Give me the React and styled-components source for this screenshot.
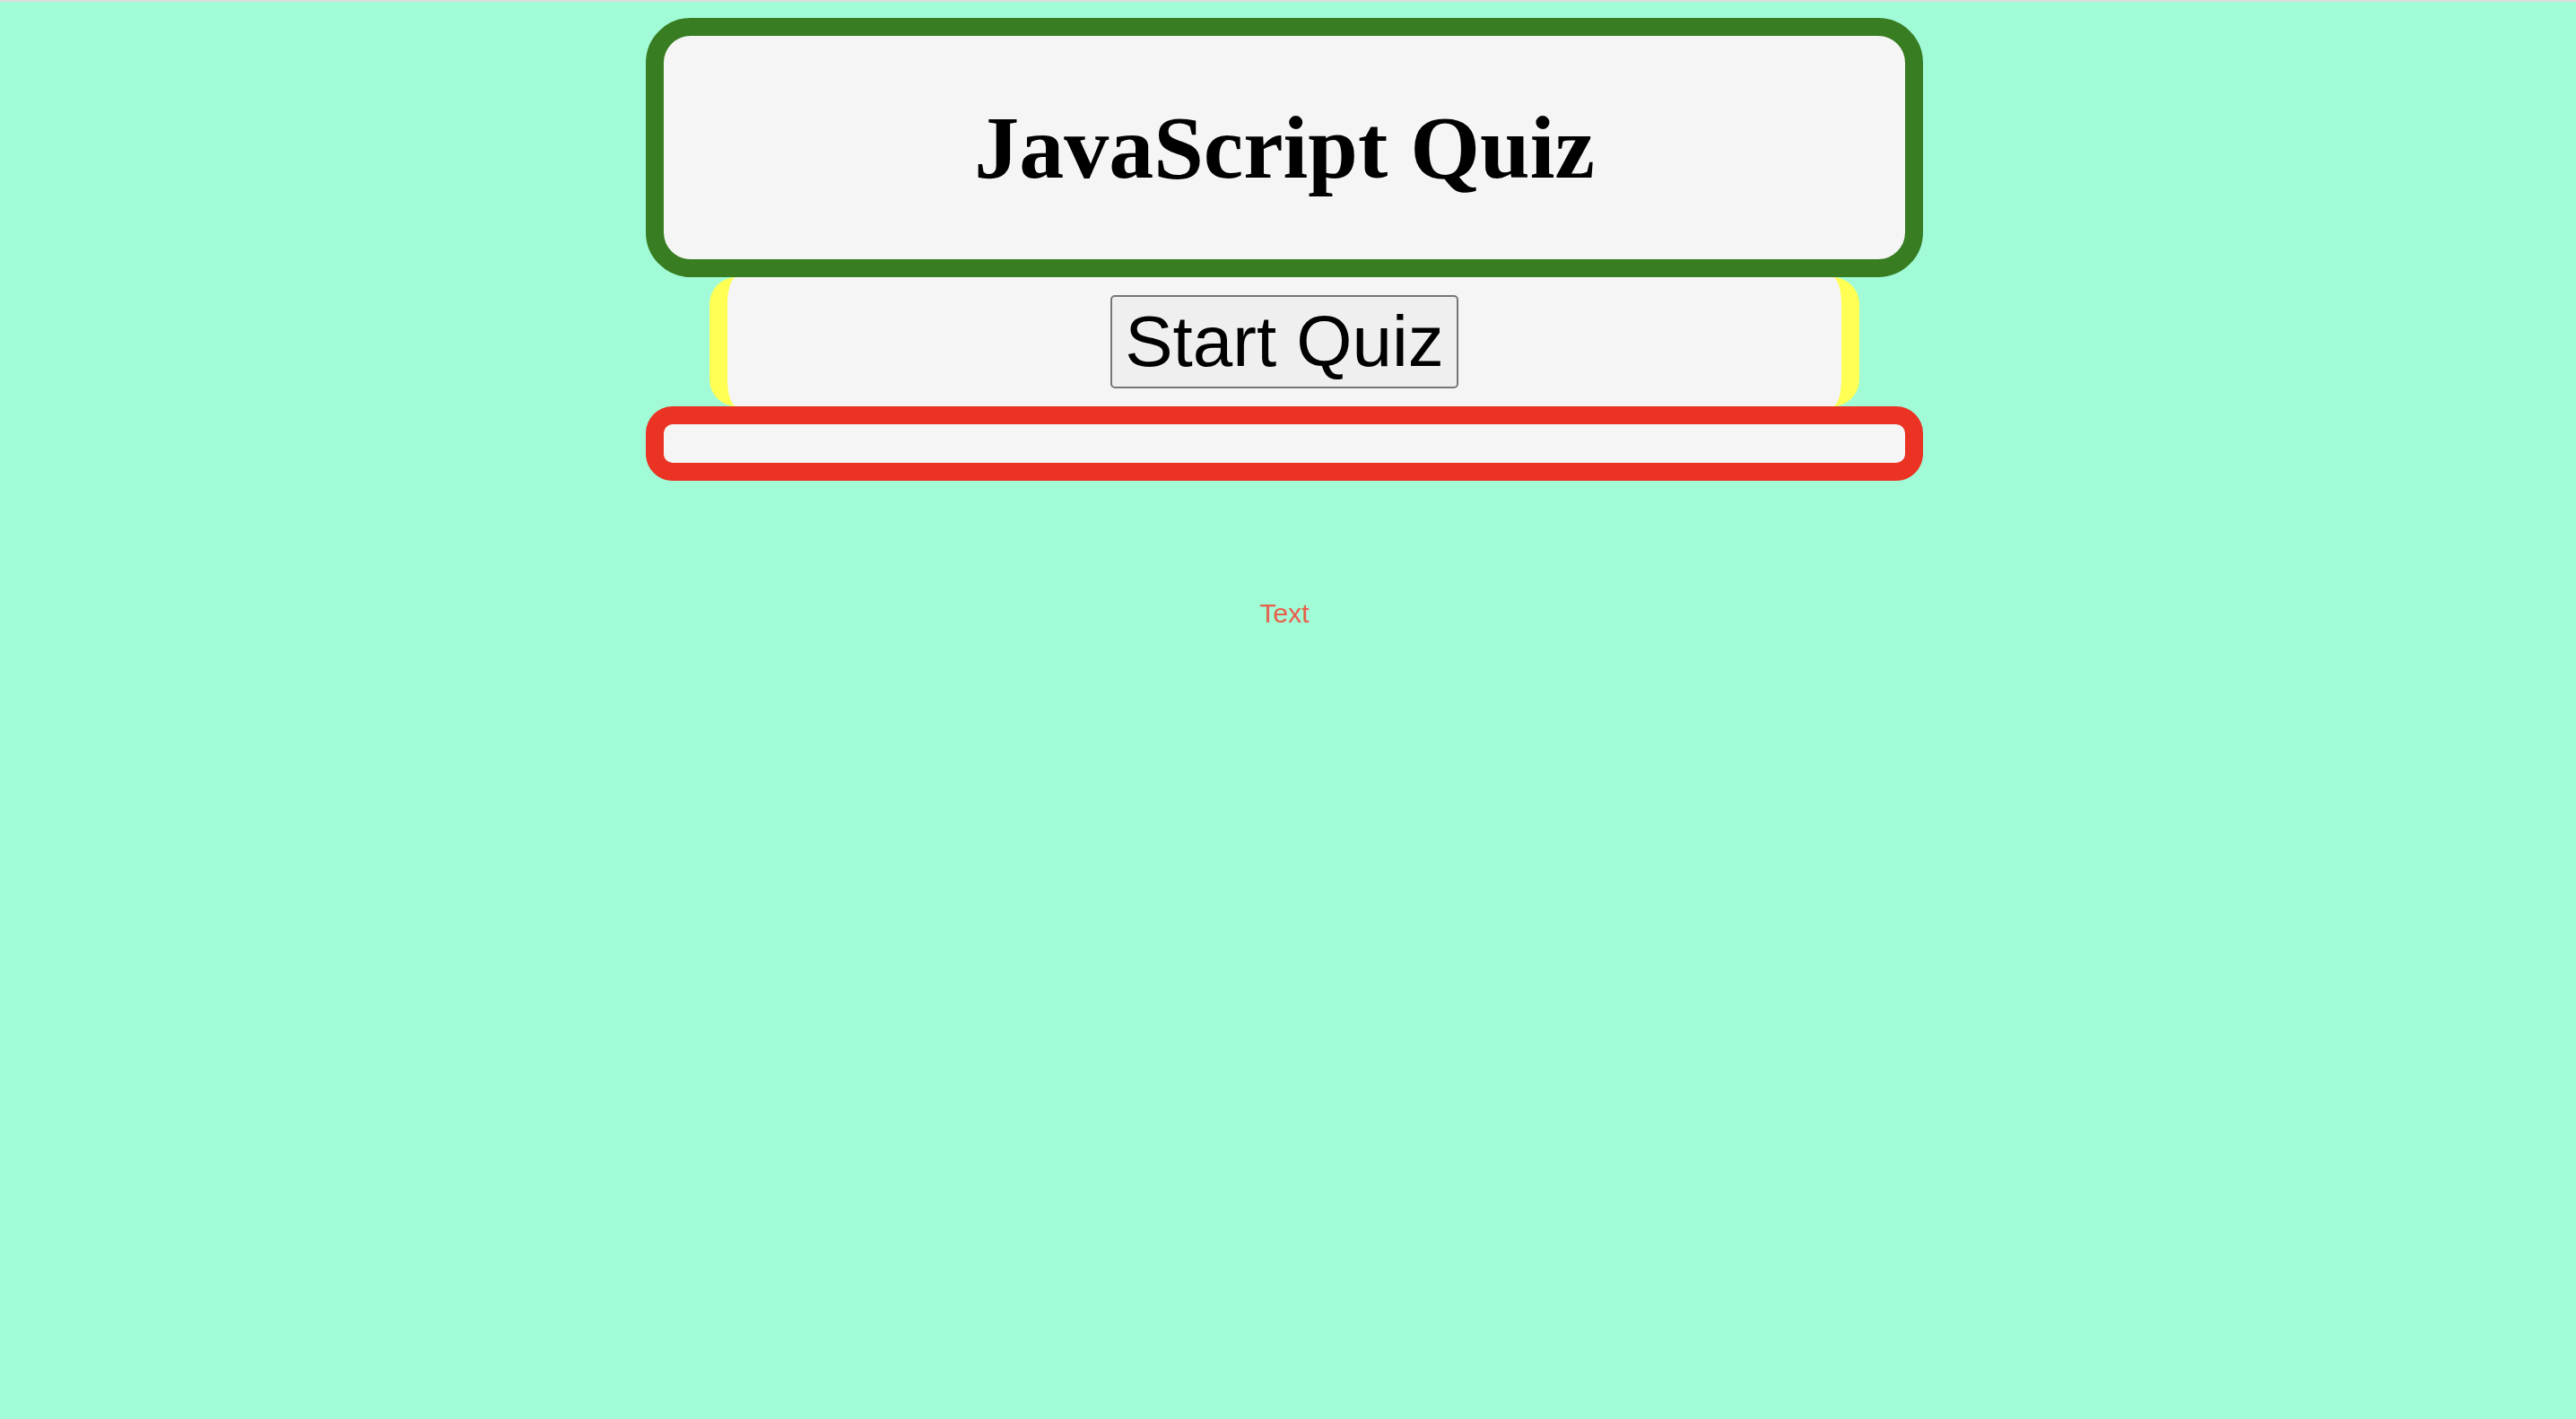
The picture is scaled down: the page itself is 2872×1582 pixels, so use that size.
import React from 'react'
import styled, { createGlobalStyle } from 'styled-components'

const GlobalStyle = createGlobalStyle`
  body {
    margin: 0;
    background: #a1fbd7;
    font-family: "Liberation Sans", Arial, sans-serif;
  }
`

const Page = styled.div`
  display: flex;
  flex-direction: column;
  align-items: center;
  min-height: 100vh;
  box-sizing: border-box;
  padding: 18px 8px 0 0;
  border-top: 2px solid #dcdcdc;
`

const Header = styled.header`
  box-sizing: border-box;
  width: 1424px;
  border: 20px solid #387d22;
  border-radius: 50px;
  background: #f5f5f5;
  text-align: center;
`

const Title = styled.h1`
  margin: 67px 0;
  font-family: "Liberation Serif", "Times New Roman", serif;
  font-size: 100px;
  font-weight: bold;
  line-height: normal;
  color: #000;
`

const Controls = styled.div`
  display: flex;
  align-items: center;
  justify-content: center;
  width: 1242px;
  height: 144px;
  border-style: solid;
  border-color: #ffff54;
  border-width: 0 20px;
  border-radius: 30px;
  background: #f5f5f5;
`

const StartButton = styled.button`
  font-family: "Liberation Sans", Arial, sans-serif;
  font-size: 80px;
  line-height: normal;
  padding: 4px 14px;
  border: 2px solid #767676;
  border-radius: 5px;
  background: #efefef;
  color: #000;
  cursor: pointer;
`

const Results = styled.div`
  box-sizing: border-box;
  width: 1424px;
  height: 83px;
  border: 20px solid #ea3323;
  border-radius: 30px;
  background: #f5f5f5;
`

const Message = styled.p`
  margin: 131px 0 0;
  font-size: 30px;
  line-height: normal;
  color: #e8604c;
`

export default function App () {
  return (
    <>
      <GlobalStyle />
      <Page>
        <Header>
          <Title>JavaScript Quiz</Title>
        </Header>
        <Controls>
          <StartButton>Start Quiz</StartButton>
        </Controls>
        <Results />
        <Message>Text</Message>
      </Page>
    </>
  )
}
